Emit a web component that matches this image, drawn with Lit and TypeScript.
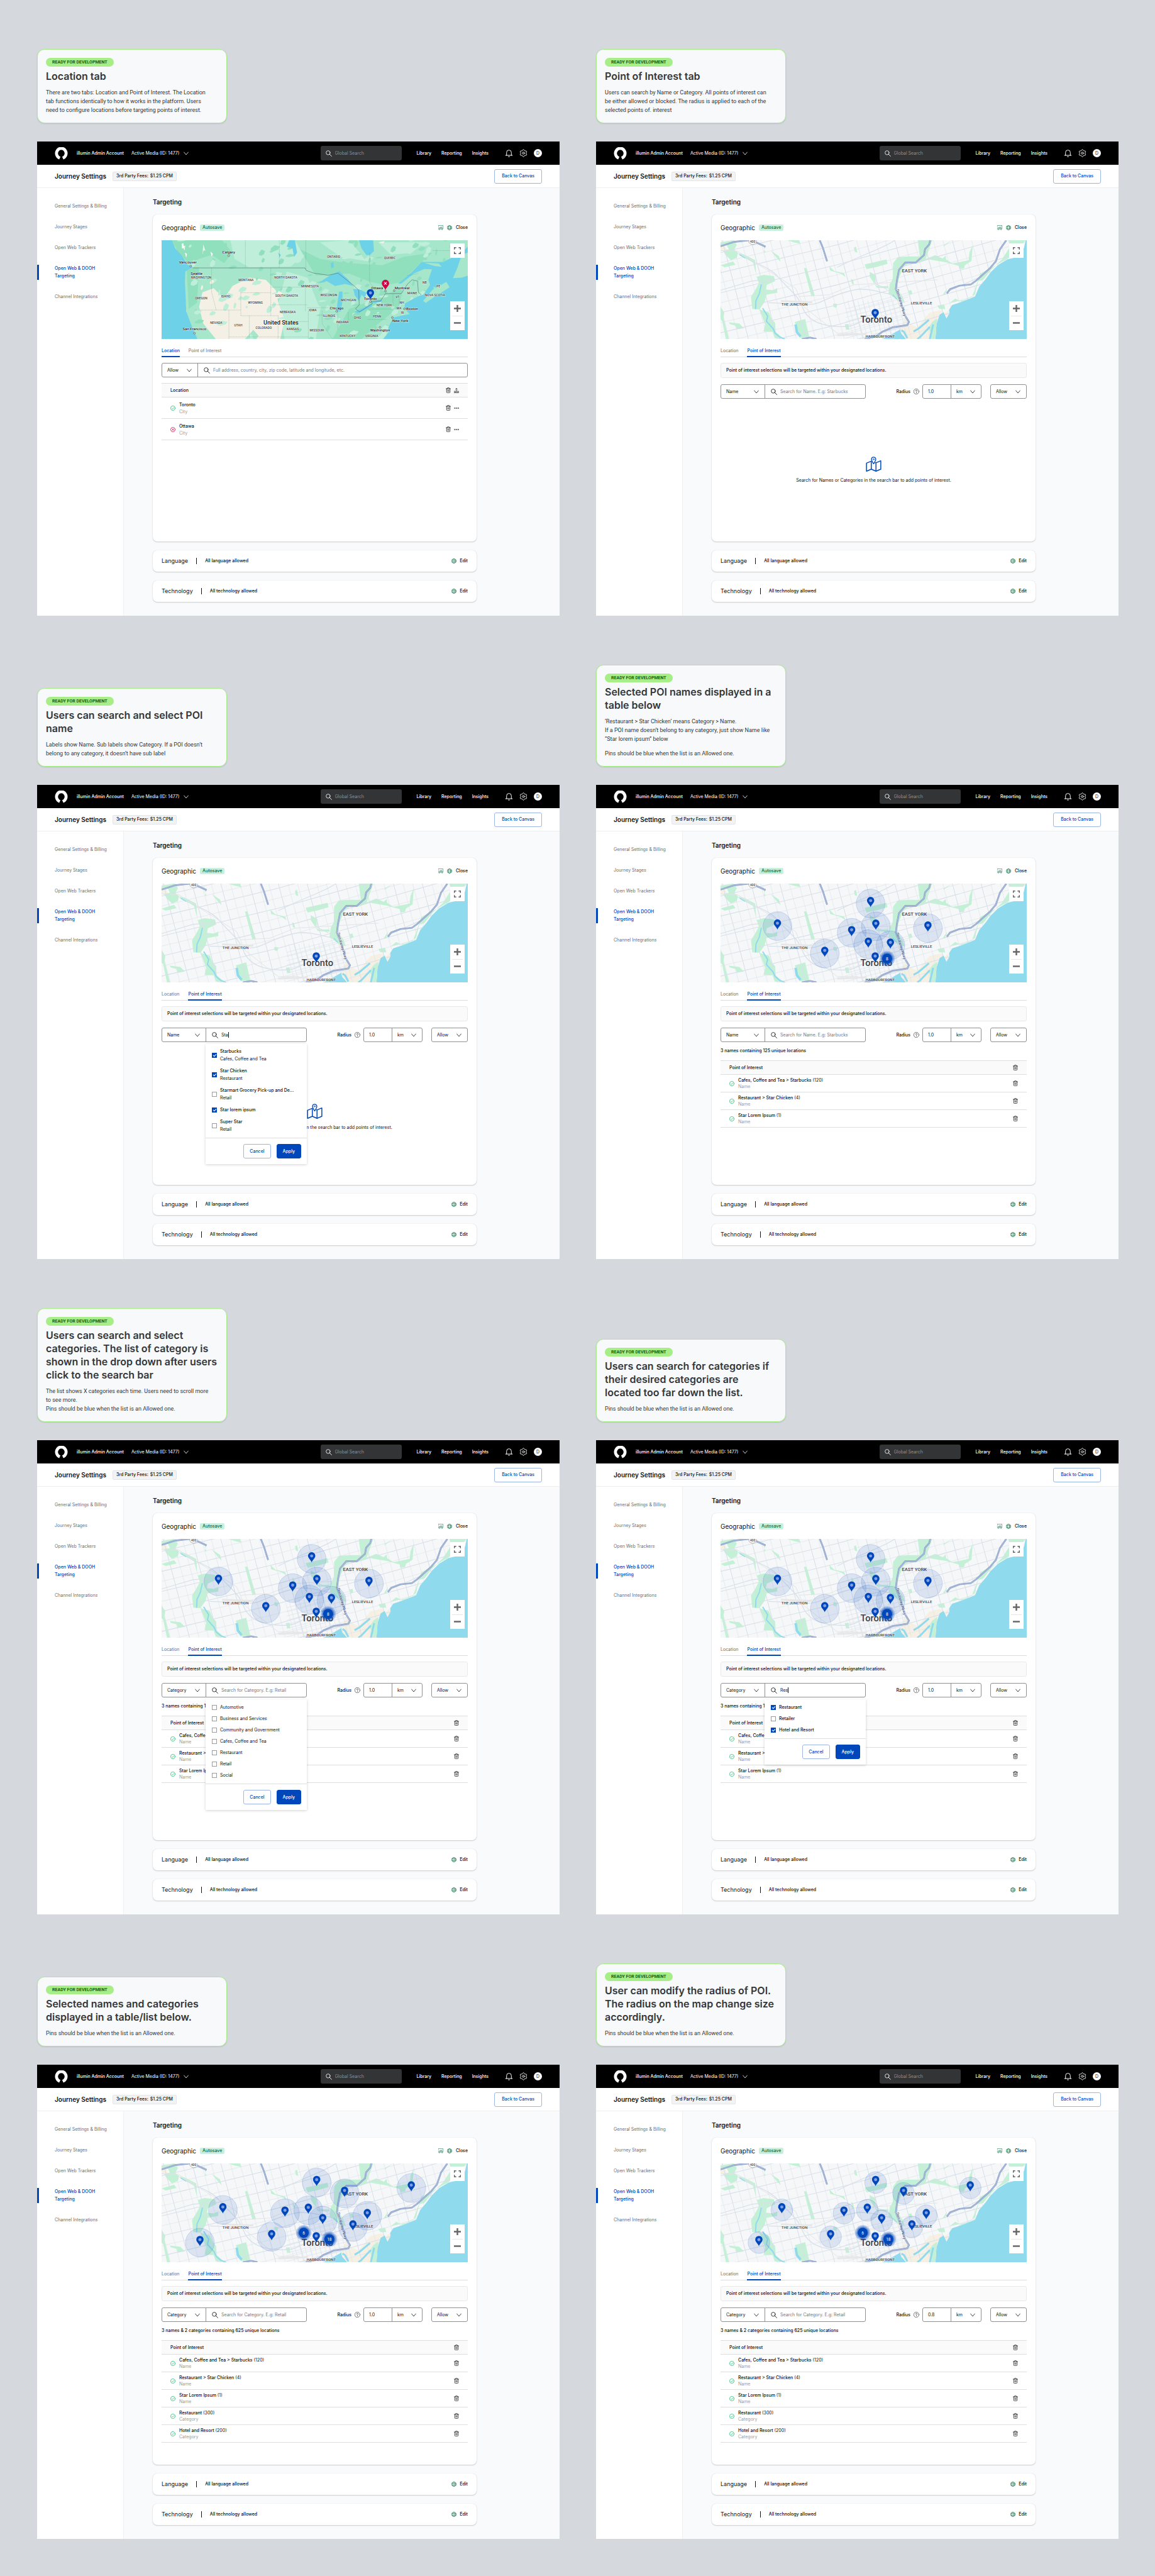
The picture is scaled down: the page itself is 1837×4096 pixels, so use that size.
import { LitElement, html, svg, css, nothing } from "lit";
import { customElement, property } from "lit/decorators.js";
import { classMap } from "lit/directives/class-map.js";

/* ---------- icons ---------- */

const icon = (box: string, body: unknown, cls = "ic") =>
  html`<svg class=${cls} viewBox=${box} fill="none" stroke="currentColor" stroke-linecap="round" stroke-linejoin="round" aria-hidden="true">${body}</svg>`;

const gearOutline = (() => {
  let d = "";
  for (let a = 0; a < 360; a += 6) {
    const t = (a * Math.PI) / 180;
    const r = 9.2 + 1.5 * Math.cos(6 * (t + Math.PI / 2));
    d += `${a ? "L" : "M"}${(12 + r * Math.cos(t)).toFixed(2)} ${(12 + r * Math.sin(t)).toFixed(2)}`;
  }
  return d + "Z";
})();

const icons = {
  logo: () => html`<svg class="logo" viewBox="0 0 36 36" aria-hidden="true">
    <path fill="#fff" d="M12 35.2A18 18.6 0 1 1 24 35.2L20.4 27.4A9.4 10 0 1 0 15.6 27.4Z" />
  </svg>`,
  chevron: () => icon("0 0 14 14", svg`<path d="M1 3.5L7 10.5L13 3.5" stroke-width="1.4"/>`, "ic chev"),
  search: () => icon("0 0 18 18", svg`<circle cx="7" cy="7" r="5.8" stroke-width="1.5"/><path d="M11.3 11.3L17 17" stroke-width="1.6"/>`, "ic mag"),
  bell: () => icon("0 0 24 24", svg`<path d="M5 18.5V10a7 7 0 0 1 14 0V18.5M2 18.5H22M10.3 22.2h3.4" stroke-width="1.8"/>`, "ic tool"),
  gear: () => icon("0 0 24 24", svg`<path d=${gearOutline} stroke-width="1.8"/><circle cx="12" cy="12" r="3" stroke-width="1.8"/>`, "ic tool"),
  board: () => icon("0 0 14 14", svg`<path d="M.7.7H13.3V10.6H.7ZM3.2 10.8V13.5M10.8 10.8V13.5M3.4 8L5.2 5.6L6.6 7.2L8.4 4.4L10.7 8Z" stroke-width="1"/>`, "ic green"),
  globe: () => icon("0 0 14 14", svg`<circle cx="7" cy="7" r="6.3"/><ellipse cx="7" cy="7" rx="3" ry="6.3"/><path d="M1.3 4.6H12.7M1.3 9.4H12.7"/>`, "ic green"),
  help: () => icon("0 0 16 16", svg`<circle cx="8" cy="8" r="7.2"/><path d="M6 6.3a2 2 0 1 1 2.9 1.8c-.6.3-.9.6-.9 1.4M8 11.6v.1" stroke-width="1.2"/>`, "ic help"),
  trash: () => icon("0 0 14 16", svg`<path d="M.8 3.6H13.2M2.2 3.8V13.4a1.8 1.8 0 0 0 1.8 1.8h6a1.8 1.8 0 0 0 1.8-1.8V3.8M4.5 3.4V1.9A1.2 1.2 0 0 1 5.7.8h2.6a1.2 1.2 0 0 1 1.2 1.1V3.4M5.5 7V11.8M8.5 7V11.8" stroke-width="1.3"/>`, "ic trash"),
  upload: () => icon("0 0 16 16", svg`<path d="M8 9V1.2M5.2 3.8L8 1L10.8 3.8M1.2 10.2H14.8V15H1.2ZM4 12.6H7M10.2 12.6H11.8" stroke-width="1.3"/>`, "ic up"),
  dots: () => icon("0 0 16 16", svg`<circle cx="2.4" cy="8" r="1.5"/><circle cx="8" cy="8" r="1.5"/><circle cx="13.6" cy="8" r="1.5"/>`, "ic up"),
  ok: () => icon("0 0 16 16", svg`<circle cx="8" cy="8" r="7.2" stroke-width="1.4"/><path d="M4.8 8.4L7 10.6L11.4 5.8" stroke-width="1.4"/>`, "ic ok"),
  no: () => icon("0 0 16 16", svg`<circle cx="8" cy="8" r="7.2" stroke-width="1.4"/><path d="M5 5L11 11M11 5L5 11" stroke-width="1.4"/>`, "ic no"),
  mapPin: () => icon("0 0 43 42", svg`<path d="M15 13L1.6 18.2V40.6L15 35L28 40.6L41.4 35V11.6L28 17.4L26.4 17M15 13V35M28 17.4V40.6" stroke-width="2.6"/><path d="M21.5 20C18 14.6 15.6 11.4 15.6 7.4a5.9 5.9 0 0 1 11.8 0C27.4 11.4 25 14.6 21.5 20Z" stroke-width="2.4" fill="#fff"/><circle cx="21.5" cy="7.4" r="1.6" stroke-width="1.6"/>`, "ic empty"),
};

/* ---------- maps ---------- */

type Mark = { x: number; y: number; n?: number; bad?: boolean; bare?: boolean };

const drop = (x: number, y: number, fill: string, inner: unknown) => svg`
  <g transform=${`translate(${x} ${y})`}>
    <path fill=${fill} d="M0 0C-4 -13 -17.5 -19 -17.5 -32A17.5 17.5 0 0 1 17.5 -32C17.5 -19 4 -13 0 0Z" />${inner}
  </g>`;

const marks = (list: Mark[], radius: number) => svg`
  ${list.filter((m) => !m.n && !m.bare).map((m) => svg`<circle cx=${m.x} cy=${m.y - 17} r=${radius} fill="#0047bb" fill-opacity=".11" stroke="#0047bb" stroke-opacity=".35" stroke-width="1.4"/>`)}
  ${list.map((m) =>
    m.n
      ? svg`<g><circle cx=${m.x} cy=${m.y} r="37" fill="#0047bb" fill-opacity=".25"/><circle cx=${m.x} cy=${m.y} r="31" fill="#0047bb" fill-opacity=".4"/><circle cx=${m.x} cy=${m.y} r="24.5" fill="#0047bb"/><text x=${m.x} y=${m.y + 7} text-anchor="middle" class="num">${m.n}</text></g>`
      : m.bad
        ? drop(m.x, m.y, "#d50045", svg`<path d="M-6 -38L6 -26M6 -38L-6 -26" stroke="#fff" stroke-width="3.4"/>`)
        : drop(m.x, m.y, "#0047bb", svg`<circle cx="0" cy="-31" r="7.5" fill="#7f9fe0"/>`)
  )}`;

const range = (n: number) => Array.from({ length: n }, (_, i) => i);

const CITY_LAND = "M0 0H1464L1456 37L1411 84L1376 92L1331 119L1296 154L1271 188L1241 223L1221 270L1156 296L1111 311L1096 334L1098 350L1084 375L1070 345L1051 357L1036 404L1031 474H890L866 447L862 428L820 452L776 474H0Z";

const HIGHWAYS = "M0 29L66 8L136 0M171 11L216 31M476 0L491 37L511 101M1006 0L1001 20L981 43L976 72L936 107L886 107L856 142L846 194L841 235L861 287L886 363L904 392L896 407L826 418L776 439L746 462L691 474M1371 0L1341 43L1321 101L1291 136L1226 194L1201 212L1146 218L1101 235L1086 255M390 474L430 467L460 474";

const city = () => svg`
  <clipPath id="land"><path d=${CITY_LAND}/></clipPath>
  <rect width="1469" height="474" fill="#90daee"/>
  <path d=${CITY_LAND} fill="#f6f7f8"/>
  <g clip-path="url(#land)">
    <path fill="#f5f0e3" d="M862 428L876 398L888 362L905 400L945 418L1002 348L1052 336L1080 350L1050 357L1036 404L1031 474H890L866 447ZM848 292L866 330L872 310ZM0 20L24 30L30 50L0 52ZM1096 334L1112 318L1084 375L1076 350Z"/>
    <g fill="#c3f1d5">
      <path d="M62 0L78 22L66 46L84 60L78 84L50 96L24 70L12 50L40 44L30 24L0 28V10ZM0 120L60 102L72 118L20 130Z"/>
      <path d="M84 62L112 68L166 96L172 176L206 166L256 172L262 196L222 214L218 236L252 240L272 230V252L236 258L220 262L212 296L186 332L152 330L146 272L166 240L184 206L176 184L156 108L118 84Z"/>
      <path d="M186 332L232 346L246 380L262 396L264 440L300 470H260L250 440L206 438L214 404L196 356Z"/>
      <path d="M356 392L406 378L426 465L380 468Z"/><path d="M400 134L412 134L452 266L436 270Z"/>
      <path d="M521 124L546 148L592 158L600 176L576 160L526 146Z"/><path d="M691 116L796 92L801 113L752 128L701 139Z"/>
      <path d="M716 152L744 168L740 212L756 222L804 220L806 230L750 228L730 196L716 176Z"/>
      <path d="M946 0H1016L998 50L984 90L1030 72L1066 88L1080 74L1082 92L1112 112L1190 96L1194 60L1210 22L1204 100L1172 120L1168 136L1146 138L1142 122L1110 114L1080 106L1000 92L940 112L900 112L878 130L856 180L846 232L872 268L884 300L856 296L826 270L806 256L812 210L826 186L828 110L850 82L900 78L956 78Z"/>
      <path d="M200 10L214 34L208 58L216 60ZM240 50L280 76L288 104L274 90ZM320 0H376L384 18L350 10ZM1070 24L1110 0L1070 30ZM640 36L650 30L656 60L644 56ZM626 186L636 190L640 214L630 208ZM540 304L560 306L556 324L542 320ZM596 404L614 402L618 430L602 428ZM40 394L90 400L112 422L78 428L72 410L44 402ZM0 320L18 346L14 372L40 474H26L8 388L0 380ZM1066 262L1086 232L1078 262ZM1100 300L1126 280L1156 296L1206 272L1226 220L1246 160L1376 90L1410 60L1464 0H1380L1390 30L1350 92L1300 140L1260 190L1236 196L1220 262L1170 286ZM1040 314L1072 308L1078 330L1050 330ZM1018 390L1040 376L1036 474H1012L1006 440L996 420ZM902 242L916 240L920 258L908 262Z"/>
    </g>
    <g stroke="#d8e0e9" fill="none">
      ${range(36).map((i) => svg`<path d=${`M${-130 + i * 46} 0L${-4 + i * 46} 474`} stroke-width=${i % 3 === 0 ? 3.2 : 1.6}/>`)}
      ${range(19).map((i) => svg`<path d=${`M0 ${60 + i * 48}L560 ${-74 + i * 48}L1469 ${-330 + i * 48}`} stroke-width=${i % 2 === 0 ? 3.2 : 1.6}/>`)}
      ${range(11).map((i) => svg`<path d=${`M${610 + i * 24} 290L${658 + i * 24} 474`} stroke-width="1.8"/>`)}
      ${range(9).map((i) => svg`<path d=${`M600 ${330 + i * 20}L900 ${252 + i * 20}`} stroke-width="1.8"/>`)}
      <path d="M86 66C150 110 230 120 280 180S370 260 392 320S470 410 560 414S640 400 700 380" stroke-width="4"/>
      <path d="M230 300C330 300 420 320 470 300S600 240 660 236S760 250 830 262" stroke-width="4"/>
      <path d="M0 240L150 196L260 186M560 130C700 60 780 40 836 0M745 170V210L800 236M1080 250L1260 170" stroke-width="3.4"/>
    </g>
    <g stroke="#e2e4e6" fill="none" stroke-width="3"><path d="M0 50L80 52L360 230L400 320L560 446H660M380 270L520 262L640 214L1040 190"/></g>
    <path d="M290 292L440 298M560 456L700 450" stroke="#e7e7e8" stroke-width="9"/>
    <g fill="none" stroke="#90daee" stroke-linejoin="round">
      <path d="M196 212L186 256L170 290L168 330M202 326L226 364L220 388L252 424L262 446L286 466L310 474" stroke-width="6"/>
      <path d="M360 404L366 440L384 462" stroke-width="12"/><path d="M92 70L118 86M826 262L846 282" stroke-width="4"/>
      <path d="M1000 382L950 424L926 438M1004 416L960 462L944 474M896 470L880 440L868 432M1020 404L1004 474" stroke-width="9"/>
    </g>
    <path fill="none" stroke="#8197c2" stroke-width="8" stroke-linejoin="round" d=${HIGHWAYS}/>
    <path fill="none" stroke="#a9b9d9" stroke-width="5" stroke-linejoin="round" d=${HIGHWAYS}/>
  </g>
  <path d="M136 -6H172V8C172 16 162 19 154 21C146 19 136 16 136 8Z" fill="#fff" stroke="#8a8d90" stroke-width="2"/>
  <g class="lb"><text x="154" y="13" class="t15" text-anchor="middle">400</text>
    <text x="870" y="155" class="t23">EAST YORK</text><text x="292" y="313" class="t18">THE JUNCTION</text>
    <text x="913" y="309" class="t18">LESLIEVILLE</text><text x="696" y="467" class="t18">HARBOURFRONT</text>
    <text transform="translate(842 238) rotate(74)" class="t18 road">Don Valley Pkwy</text>
    <text x="671" y="396" class="t44">Toronto</text></g>`;

const REGIONS: [number, number, string][] = [
  [826, 84, "ONTARIO"], [1095, 91, "QUEBEC"], [1262, 207, "NB"], [1328, 226, "PE"], [1202, 261, "MAINE"],
  [1312, 269, "NOVA SCOTIA"], [1132, 278, "VT"], [1152, 304, "NH"], [1139, 333, "MA"], [1156, 353, "RI"],
  [1068, 318, "NEW YORK"], [1034, 371, "PENN"], [940, 378, "OHIO"], [868, 397, "INDIANA"], [804, 368, "ILLINOIS"],
  [897, 293, "MICHIGAN"], [802, 269, "WISCONSIN"], [725, 342, "IOWA"], [745, 437, "MISSOURI"], [892, 465, "KENTUCKY"],
  [1008, 465, "VIRGINIA"], [712, 227, "MINNESOTA"], [629, 431, "KANSAS"], [490, 426, "COLORADO"], [368, 412, "UTAH"],
  [262, 400, "NEVADA"], [405, 195, "MONTANA"], [450, 306, "WYOMING"], [596, 183, "NORTH DAKOTA"], [600, 272, "SOUTH DAKOTA"],
  [605, 350, "NEBRASKA"], [190, 283, "OREGON"], [308, 275, "IDAHO"], [190, 184, "WASHINGTON"],
];

const CITIES: [number, number, string, number, number][] = [
  [1034, 236, "Ottawa", 1074, 244], [1154, 235, "Montreal", 1116, 242], [1002, 286, "Toronto", 1002, 294],
  [840, 332, "Chicago", 840, 341], [1202, 334, "Boston", 1165, 329], [1145, 392, "New York", 1107, 371],
  [1048, 437, "Washington", 1048, 418], [158, 432, "San Francisco", 158, 446], [322, 64, "Calgary", 322, 74],
  [126, 112, "Vancouver", 140, 124], [168, 166, "Seattle", 150, 176],
];

const MAINLAND = "M50 0L66 40L92 66L125 118L150 130L114 150L112 200L115 260L118 340L140 400L160 446L172 474H1063L1090 440L1087 420L1111 371L1150 362L1190 355L1167 329V304L1200 285L1239 265L1255 262L1288 214L1280 190L1297 140L1260 138L1210 160L1150 208L1135 207L1199 155L1247 104L1350 104L1406 78L1440 60L1469 30V0Z";

/* Small vegetation patches, spread with a fixed linear-congruential sequence. */
const patches = (() => {
  let seed = 7;
  const next = () => (seed = (seed * 16807) % 2147483647) / 2147483647;
  return range(240).map(() => {
    const x = next() * 1469;
    const y = next() * 474;
    const arid = x > 170 && x < 560 && y > 190;
    const tone = next();
    const fill = arid ? (tone < 0.5 ? "#bdeed8" : "#f5f0e5") : y > 90 && y < 200 && x > 700 ? "#90dfbd" : tone < 0.5 ? "#90dfbd" : "#bfeeda";
    const w = 8 + next() * 30;
    const h = 4 + next() * 14;
    return { d: `M${x} ${y}l${w * 0.5} ${-h}l${w * 0.7} ${h * 0.5}l${-w * 0.2} ${h}l${-w * 0.6} ${h * 0.6}l${-w * 0.5} ${-h * 0.3}Z`, fill };
  });
})();

const continent = () => svg`
  <clipPath id="main"><path d=${MAINLAND}/></clipPath>
  <rect width="1469" height="474" fill="#6dd2e7"/>
  <path fill="#a6e7cb" d=${MAINLAND}/>
  <path fill="#a6e7cb" d="M1255 291L1300 238L1366 200L1382 226L1310 271L1268 300ZM1398 182L1420 130L1440 70L1469 60V170L1440 180ZM1304 222L1322 232L1306 234ZM1260 108L1330 112L1344 128L1310 124Z"/>
  <g clip-path="url(#main)">
    <path fill="#90dfbd" d="M50 0H290L340 60L300 110L240 70L180 90L130 110L80 60ZM660 40L760 90L900 110L1060 120L1160 80L1300 60L1240 110L1150 200L1080 215L1000 200L900 160L740 170ZM900 330L1060 270L1160 220L1140 320L1040 400L960 474H820L860 400ZM120 130L180 130L170 300L130 330Z"/>
    <path fill="#bfeeda" d="M330 0H640L680 70L620 126L420 130L350 90ZM760 10L900 0L950 60L980 100L860 80ZM1040 10L1260 10L1200 60L1100 70ZM600 150L700 180L760 330L740 474H590L560 300Z"/>
    <path fill="#f5f0e5" d="M196 250L250 230L300 280L340 220L420 180L500 190L548 240L560 300L590 380L570 474H480L440 430L400 474H260L200 400L180 320ZM1040 10L1070 4L1064 16ZM200 20L210 50L196 70ZM100 30L114 26L110 50Z"/>
    ${patches.map((p) => svg`<path fill=${p.fill} d=${p.d}/>`)}
    <path fill="#fff" d="M96 18L104 14L108 34L98 40ZM112 60L122 66L118 84ZM234 54L246 66L240 78Z"/>
  </g>
  <path fill="#6dd2e7" d="M947 0H1015L1019 52L1000 70L983 72L959 39ZM752 207L808 168L852 149L895 188L919 220L880 210L832 220L792 196ZM840 342L844 297L852 246L868 246L868 291L860 342ZM919 233L950 236L983 252L975 278L960 262L947 291L927 265ZM927 342L970 324L1011 304L1008 318L940 352ZM1007 297L1055 284L1059 294L1020 302ZM812 110L824 104L826 130L814 134ZM600 30L612 0H640L650 60L636 80L628 40ZM560 60L572 70L566 84Z"/>
  <path fill="none" stroke="#5d8f80" stroke-width="1.2" stroke-dasharray="4 3" d="M402 0V133M565 0V133M692 0V140M998 60V200L1030 250M240 133V250L262 335M323 335V474M380 252V362M421 362V474M559 362V474M704 340V474M160 335H380M380 252H524M524 133V362M524 225H680M524 310H700M380 362H560M559 390H704M323 464H704M690 210V340M700 324H800M896 345V390M845 345V430M990 330H1110M990 380H1080M1110 260V330M1140 262V320M1180 170L1230 160M1300 50H1400M770 340V400L820 474"/>
  <path fill="none" stroke="#456" stroke-width="1.6" d="M150 133H688L694 145L730 158L800 168L846 158L920 216L946 240L948 310L930 330L950 344L1011 304L1007 293L1050 292L1074 256L1150 256L1180 210L1202 190L1228 196L1232 250L1246 262"/>
  <g class="lb">${REGIONS.map(([x, y, t]) => svg`<text x=${x} y=${y} class="t15" text-anchor="middle">${t}</text>`)}
    ${CITIES.map(([x, y, t, cx, cy]) => svg`<text x=${x} y=${y} class="t18 dark" text-anchor="middle">${t}</text><circle cx=${cx} cy=${cy} r="4" fill="#fff" stroke="#333" stroke-width="2"/>`)}
    <text x="573" y="404" class="t28 dark" text-anchor="middle">United States</text></g>`;

@customElement("geo-map")
export class GeoMap extends LitElement {
  @property() kind: "city" | "continent" = "city";
  @property({ attribute: false }) marks: Mark[] = [];
  @property({ type: Number }) radius = 69;

  static styles = css`
    :host { display: block; position: relative; height: 157px; font-family: Roboto, sans-serif; }
    .map { display: block; width: 100%; height: 100%; }
    .lb text { fill: #3c4043; font-weight: 500; paint-order: stroke; stroke: #ffffffb0; stroke-width: 3px; }
    .lb .dark { fill: #202124; }
    .t15 { font-size: 15px; }
    .t18 { font-size: 18px; }
    .t23 { font-size: 23px; }
    .t28 { font-size: 28px; }
    .t44 { font-size: 44px; }
    .lb .road { fill: #5a6a8c; }
    .num { fill: #fff; font-size: 20px; }
    button { display: grid; place-items: center; width: 23px; height: 23px; padding: 0; border: 0; background: #fff; color: #666; }
    button svg { width: 11px; height: 11px; display: block; }
    .full, .zoom { position: absolute; right: 5px; border-radius: 1px; }
    .full { top: 5px; }
    .zoom { bottom: 14px; background: #fff; }
    .zoom button + button { position: relative; }
    .zoom button + button::before { content: ""; position: absolute; top: 0; left: 3px; right: 3px; height: 1px; background: #e6e6e6; }
  `;

  render() {
    return html`
      <svg class="map" viewBox="0 0 1469 474" preserveAspectRatio="xMidYMid slice" role="img" aria-label="Targeted area">
        ${this.kind === "city" ? city() : continent()} ${marks(this.marks, this.radius)}
      </svg>
      <button class="full" aria-label="Full screen">
        <svg viewBox="0 0 18 18" fill="none" stroke="currentColor" stroke-width="2.4"><path d="M1.2 6V1.2H6M12 1.2H16.8V6M16.8 12V16.8H12M6 16.8H1.2V12" /></svg>
      </button>
      <div class="zoom">
        <button aria-label="Zoom in"><svg viewBox="0 0 18 18" stroke="currentColor" stroke-width="4"><path d="M9 0V18M0 9H18" /></svg></button>
        <button aria-label="Zoom out"><svg viewBox="0 0 18 18" stroke="currentColor" stroke-width="4"><path d="M0 9H18" /></svg></button>
      </div>`;
  }
}

/* ---------- data ---------- */

type Option = { label: string; sub?: string; on?: boolean };
type Row = { name: string; count?: number; sub: string; bad?: boolean };
type Screen = {
  title: string[];
  body: string[][];
  tab: "location" | "poi";
  by?: "Name" | "Category";
  query?: string;
  radius?: string;
  marks: Mark[];
  ring?: number;
  menu?: Option[];
  summary?: string;
  rows?: Row[];
};

const HOME: Mark = { x: 742, y: 379, bare: true };

const NAME_MARKS: Mark[] = [
  { x: 720, y: 113 }, { x: 273, y: 221 }, { x: 745, y: 222 }, { x: 629, y: 253 }, { x: 995, y: 231 },
  { x: 709, y: 308 }, { x: 815, y: 313 }, { x: 500, y: 352 }, HOME, { x: 799, y: 360, n: 8 },
];

const ALL_MARKS: Mark[] = [
  { x: 744, y: 109 }, { x: 878, y: 161 }, { x: 1198, y: 135 }, { x: 294, y: 240 }, { x: 592, y: 256 }, { x: 704, y: 242 },
  { x: 773, y: 292 }, { x: 987, y: 268 }, { x: 918, y: 322 }, { x: 528, y: 369 }, { x: 184, y: 397 }, HOME,
  { x: 682, y: 333, n: 6 }, { x: 805, y: 364, n: 18 },
];

const NAME_ROWS: Row[] = [
  { name: "Cafes, Coffee and Tea > Starbucks", count: 120, sub: "Name" },
  { name: "Restaurant > Star Chicken", count: 4, sub: "Name" },
  { name: "Star Lorem Ipsum", count: 1, sub: "Name" },
];

const ALL_ROWS: Row[] = [
  ...NAME_ROWS,
  { name: "Restaurant", count: 300, sub: "Category" },
  { name: "Hotel and Resort", count: 200, sub: "Category" },
];

const PINS_NOTE = "Pins should be blue when the list is an Allowed one.";

const SCREENS: Screen[][] = [
  [
    {
      title: ["Location tab"],
      body: [["There are two tabs: Location and Point of Interest. The Location", "tab functions identically to how it works in the platform. Users", "need to configure locations before targeting points of interest."]],
      tab: "location",
      marks: [{ x: 1002, y: 284, bare: true }, { x: 1074, y: 239, bare: true, bad: true }],
      rows: [{ name: "Toronto", sub: "City" }, { name: "Ottawa", sub: "City", bad: true }],
    },
    {
      title: ["Point of Interest tab"],
      body: [["Users can search by Name or Category. All points of interest can", "be either allowed or blocked. The radius is applied to each of the", "selected points of. interest"]],
      tab: "poi",
      by: "Name",
      marks: [HOME],
    },
  ],
  [
    {
      title: ["Users can search and select POI", "name"],
      body: [["Labels show Name. Sub labels show Category. If a POI doesn’t", "belong to any category, it doesn’t have sub label"]],
      tab: "poi",
      by: "Name",
      query: "Sta",
      marks: [HOME],
      menu: [
        { label: "Starbucks", sub: "Cafes, Coffee and Tea", on: true },
        { label: "Star Chicken", sub: "Restaurant", on: true },
        { label: "Starmart Grocery Pick-up and De...", sub: "Retail" },
        { label: "Star lorem ipsum", on: true },
        { label: "Super Star", sub: "Retail" },
      ],
    },
    {
      title: ["Selected POI names displayed in a", "table below"],
      body: [["‘Restaurant > Star Chicken’ means Category > Name.", "If a POI name doesn’t belong to any category, just show Name like", "“Star lorem ipsum” below"], [PINS_NOTE]],
      tab: "poi",
      by: "Name",
      marks: NAME_MARKS,
      summary: "3 names containing 125 unique locations",
      rows: NAME_ROWS,
    },
  ],
  [
    {
      title: ["Users can search and select", "categories. The list of category is", "shown in the drop down after users", "click to the search bar"],
      body: [["The list shows X categories each time. Users need to scroll more", "to see more.", PINS_NOTE]],
      tab: "poi",
      by: "Category",
      marks: NAME_MARKS,
      summary: "3 names containing 125 unique locations",
      rows: NAME_ROWS,
      menu: ["Automotive", "Business and Services", "Community and Government", "Cafes, Coffee and Tea", "Restaurant", "Retail", "Social"].map((label) => ({ label })),
    },
    {
      title: ["Users can search for categories if", "their desired categories are", "located too far down the list."],
      body: [[PINS_NOTE]],
      tab: "poi",
      by: "Category",
      query: "Res",
      marks: NAME_MARKS,
      summary: "3 names containing 125 unique locations",
      rows: NAME_ROWS,
      menu: [{ label: "Restaurant", on: true }, { label: "Retailer" }, { label: "Hotel and Resort", on: true }],
    },
  ],
  [
    {
      title: ["Selected names and categories", "displayed in a table/list below."],
      body: [[PINS_NOTE]],
      tab: "poi",
      by: "Category",
      marks: ALL_MARKS,
      summary: "3 names & 2 categories containing 625 unique locations",
      rows: ALL_ROWS,
    },
    {
      title: ["User can modify the radius of POI.", "The radius on the map change size", "accordingly."],
      body: [[PINS_NOTE]],
      tab: "poi",
      by: "Category",
      radius: "0.8",
      ring: 52,
      marks: ALL_MARKS,
      summary: "3 names & 2 categories containing 625 unique locations",
      rows: ALL_ROWS,
    },
  ],
];

/* ---------- annotation card ---------- */

@customElement("note-card")
export class NoteCard extends LitElement {
  @property({ attribute: false }) heading: string[] = [];
  @property({ attribute: false }) body: string[][] = [];

  static styles = css`
    :host { display: block; box-sizing: border-box; width: 302px; padding: 13px; background: #f7f9fb; border: 1px solid #a8ee88; border-radius: 12px; box-shadow: 0 1px 2px #0000001f; color: #333639; white-space: nowrap; }
    .badge { display: table; padding: 0 10px; height: 14px; border-radius: 7px; background: #a8ee88; color: #17600f; font: 700 7px/14px Roboto, sans-serif; }
    h2 { margin: 5px 0 8px; font: 600 16px/21px Inter, sans-serif; }
    p { margin: 0; font: 400 9px/14px Roboto, sans-serif; }
    p + p { margin-top: 9px; }
  `;

  render() {
    const lines = (l: string[]) => l.map((t, i) => html`${i ? html`<br />` : nothing}${t}`);
    return html`<span class="badge">READY FOR DEVELOPMENT</span>
      <h2>${lines(this.heading)}</h2>
      ${this.body.map((p) => html`<p>${lines(p)}</p>`)}`;
  }
}

/* ---------- product screen ---------- */

const NAV = [["General Settings & Billing"], ["Journey Stages"], ["Open Web Trackers"], ["Open Web & DOOH", "Targeting"], ["Channel Integrations"]];

@customElement("settings-screen")
export class SettingsScreen extends LitElement {
  @property({ attribute: false }) data!: Screen;

  static styles = css`
    :host { display: flex; flex-direction: column; background: #f9fafb; color: #111; font: 400 7px/12px Inter, sans-serif; }
    * { box-sizing: border-box; }
    button, input, select { font: inherit; color: inherit; margin: 0; }
    a { color: inherit; text-decoration: none; }
    svg { display: block; flex: none; }
    .ic { width: 8px; height: 8px; }
    .trash { height: 9px; }
    .mag { width: 10px; height: 10px; }
    .help { width: 9px; height: 9px; }
    .tool { width: 13px; height: 13px; }
    .green { color: #0a6b42; }
    .ok { color: #12b76a; }
    .no { color: #d50045; }
    .empty { width: 25px; height: 24px; color: #0047bb; }

    .top { display: flex; align-items: center; height: 37px; padding: 0 28px; background: #000; color: #fff; }
    .logo { width: 21px; height: 20px; }
    .top strong { font-weight: 500; margin-left: 14px; }
    .account { display: flex; align-items: center; gap: 7px; margin-left: 12px; padding: 0; border: 0; background: none; }
    .global { display: flex; align-items: center; gap: 5px; width: 129px; height: 23px; margin-left: auto; padding: 0 8px; border-radius: 3px; background: #333436; }
    .global input { flex: 1; min-width: 0; padding: 0; border: 0; background: none; }
    .global input::placeholder { color: #8c8f91; opacity: 1; }
    .links { display: flex; gap: 16px; margin: 0 26px 0 24px; font-weight: 500; }
    .tools { display: flex; align-items: center; gap: 10px; }
    .tools button { display: grid; padding: 0; border: 0; background: none; }
    .tools .avatar { width: 13px; height: 13px; place-items: center; border-radius: 50%; background: #fff; color: #111; line-height: 13px; }

    .sub { display: flex; align-items: center; height: 37px; padding: 0 28px; background: #fff; border-bottom: 1px solid #eceef0; }
    h1, h2, h3 { margin: 0; font: 600 10px/14px Inter, sans-serif; }
    .fee { display: flex; align-items: center; gap: 3px; height: 15px; margin-left: 10px; padding: 0 5px; border: 1px solid #e3e5e6; border-radius: 2px; background: #f2f3f4; font-weight: 500; }
    .back { margin-left: auto; }
    .btn { height: 23px; padding: 0 9px; border: 1px solid #9db6e6; border-radius: 3px; background: #fff; color: #0047bb; font-weight: 500; }
    .btn.back { padding: 0 11px; }
    .btn.solid { border-color: #0047bb; background: #0047bb; color: #fff; }

    .cols { display: grid; grid-template-columns: 138px 1fr; flex: 1; }
    nav.side { display: flex; flex-direction: column; gap: 21px; padding-top: 23px; background: #fff; border-right: 1px solid #eef0f2; color: #6b6f72; }
    nav.side a { padding: 0 25px; border-left: 3px solid transparent; }
    nav.side a.on { color: #0047bb; border-left-color: #0047bb; font-weight: 500; }

    main { display: flex; flex-direction: column; gap: 14px; padding: 15px 132px 22px 46px; }
    main > h2 { margin-bottom: -1px; }
    .card { display: flex; flex-direction: column; padding: 0 14px; border-radius: 7px; background: #fff; box-shadow: 0 0 1px #0a285033, 0 1px 2px #0000002b; }
    .geo { min-height: 520px; }
    .head { display: flex; align-items: center; gap: 6px; height: 41px; }
    .head h3 { font-weight: 400; }
    .auto { padding: 0 4px; border-radius: 2px; background: #c9f0de; color: #0a6b42; font-weight: 500; line-height: 10px; }
    .head .end { display: flex; align-items: center; gap: 6px; margin-left: auto; font-weight: 500; }
    .link { padding: 0; border: 0; background: none; font-weight: 500; }
    .line { display: flex; align-items: center; height: 34px; }
    .line h3 { font: 400 9px/14px Inter, sans-serif; }
    .line i { width: 1px; height: 10px; margin: 0 13px; background: #111; }
    .line .end { display: flex; align-items: center; gap: 5px; margin-left: auto; }

    .tabs { display: flex; gap: 14px; height: 19px; margin: 10px 0 9px; border-bottom: 1px solid #d9dbdd; }
    .tabs button { height: 19px; padding: 0; border: 0; border-bottom: 2px solid transparent; background: none; color: #6b6f72; }
    .tabs .on { color: #0047bb; border-color: #0047bb; font-weight: 500; }
    .banner { margin: 0 0 10px; height: 24px; padding: 0 8px; border: 1px solid #e8e9ea; border-radius: 3px; background: #fafafa; font-weight: 500; line-height: 22px; }
    .controls { display: flex; align-items: center; gap: 14px; }
    .group { display: flex; height: 23px; border: 1px solid #8f9193; border-radius: 3px; background: #fff; }
    .group > * + * { border-left: 1px solid #8f9193; }
    .combo { position: relative; width: 231px; }
    .pick { position: relative; display: flex; align-items: center; width: 56px; }
    .pick.by { width: 69px; }
    .pick.unit { width: 48px; }
    .pick select { width: 100%; height: 21px; padding: 0 8px; border: 0; background: none; appearance: none; }
    .chev { pointer-events: none; }
    .pick .chev { position: absolute; right: 9px; }
    .find { display: flex; flex: 1; align-items: center; gap: 5px; min-width: 0; padding: 0 9px; }
    .find input { flex: 1; min-width: 0; padding: 0; border: 0; outline: 0; background: none; }
    .find input::placeholder { color: #77797b; opacity: 1; }
    .find.typed { gap: 0; }
    .find.typed input { flex: none; field-sizing: content; }
    .find.typed .mag { margin-right: 5px; }
    .caret { width: 1px; height: 9px; background: #111; }
    .radius { display: flex; align-items: center; gap: 5px; margin-left: auto; font-weight: 500; }
    .radius input { width: 44px; padding: 0 8px; border: 0; background: none; font-weight: 400; }
    .radius .group { font-weight: 400; }

    .combo .menu { position: absolute; z-index: 1; top: 25px; left: 69px; right: -1px; border: 0; background: #fff; box-shadow: 0 1px 4px #0000002e; }
    .menu ul { margin: 0; padding: 7px 10px; list-style: none; display: grid; gap: 6px; border-bottom: 1px solid #dcdee0; }
    .menu ul.rich { padding: 6px 10px 7px; gap: 7px; }
    .menu label { display: flex; align-items: center; gap: 5px; }
    .menu label > span { min-width: 0; white-space: nowrap; }
    .strong { font-weight: 500; }
    .menu small { display: block; font-size: 7px; font-weight: 400; }
    .menu input { appearance: none; flex: none; width: 8px; height: 8px; border: 1px solid #9a9c9e; background: #fff; display: grid; place-items: center; }
    .menu input:checked { border-color: #0047bb; background: #0047bb; }
    .menu input:checked::after { content: ""; width: 2px; height: 4px; border: solid #fff; border-width: 0 1px 1px 0; transform: translateY(-1px) rotate(45deg); }
    .menu .acts { display: flex; justify-content: flex-end; gap: 9px; padding: 9px; }

    .sum { margin: 8px 0 0; font-weight: 500; }
    table { width: 100%; margin-top: 9px; border-collapse: collapse; }
    tr { border-bottom: 1px solid #dcdee0; }
    thead tr { height: 22px; border-top: 1px solid #dcdee0; background: #fafafa; }
    tbody tr { height: 28px; }
    .tall tbody tr { height: 34px; }
    th { padding: 0 0 0 14px; text-align: left; font-weight: 500; }
    td { padding: 0; }
    .mark { width: 28px; padding-left: 14px; }
    td b { display: block; font-weight: 500; line-height: 10px; }
    td b span { font-weight: 400; }
    td small { display: block; font-size: 7px; line-height: 10px; color: #9a9c9e; }
    .tall td b, .tall td small { line-height: 11px; }
    .row-acts { display: flex; justify-content: flex-end; align-items: center; gap: 5px; padding-right: 14px; }
    .row-acts button { display: block; padding: 0; border: 0; background: none; }
    .none { display: flex; flex: 1; flex-direction: column; align-items: center; justify-content: center; gap: 9px; line-height: 10px; }
    .none.low { padding-top: 12px; }
    .none p { margin: 0; }
  `;

  private pick(label: string, value: string, cls = "") {
    return html`<span class="pick ${cls}"><select aria-label=${label}><option>${value}</option></select>${icons.chevron()}</span>`;
  }

  private find(placeholder: string, query?: string) {
    return html`<label class=${classMap({ find: true, typed: !!query })}>${icons.search()}
      <input type="text" aria-label="Search" placeholder=${query ? "" : placeholder} .value=${query ?? ""} />${query ? html`<span class="caret"></span>` : nothing}</label>`;
  }

  private menu(items: Option[]) {
    const rich = items.some((o) => o.sub);
    return html`<div class="menu">
      <ul class=${rich ? "rich" : ""}>
        ${items.map((o) => html`<li><label><input type="checkbox" .checked=${!!o.on} /><span class=${rich || this.data.query ? "strong" : ""}>${o.label}${o.sub ? html`<small>${o.sub}</small>` : nothing}</span></label></li>`)}
      </ul>
      <div class="acts"><button class="btn">Cancel</button><button class="btn solid">Apply</button></div>
    </div>`;
  }

  private table(rows: Row[], loc: boolean) {
    return html`<table class=${loc ? "tall" : ""}>
      <thead><tr><th colspan="2">${loc ? "Location" : "Point of Interest"}</th>
        <th><div class="row-acts"><button aria-label="Delete all">${icons.trash()}</button>${loc ? html`<button aria-label="Upload">${icons.upload()}</button>` : nothing}</div></th></tr></thead>
      <tbody>${rows.map((r) => html`<tr>
        <td class="mark">${r.bad ? icons.no() : icons.ok()}</td>
        <td><b>${r.name}${r.count ? html` <span>(${r.count})</span>` : nothing}</b><small>${r.sub}</small></td>
        <td><div class="row-acts"><button aria-label="Delete">${icons.trash()}</button>${loc ? html`<button aria-label="More">${icons.dots()}</button>` : nothing}</div></td>
      </tr>`)}</tbody>
    </table>`;
  }

  private poi(d: Screen) {
    return html`<p class="banner">Point of interest selections will be targeted within your designated locations.</p>
      <div class="controls">
        <div class="group combo">${this.pick("Search by", d.by!, "by")}
          ${this.find(d.by === "Name" ? "Search for Name. E.g: Starbucks" : "Search for Category. E.g: Retail", d.query)}
          ${d.menu ? this.menu(d.menu) : nothing}</div>
        <div class="radius"><label for="radius">Radius</label>${icons.help()}
          <div class="group"><input id="radius" type="text" .value=${d.radius ?? "1.0"} />${this.pick("Unit", "km", "unit")}</div></div>
        <div class="group">${this.pick("Rule", "Allow")}</div>
      </div>
      ${d.summary ? html`<p class="sum">${d.summary}</p>` : nothing}
      ${d.rows ? this.table(d.rows, false) : html`<div class=${classMap({ none: true, low: !!d.menu })}>${icons.mapPin()}<p>Search for Names or Categories in the search bar to add points of interest.</p></div>`}`;
  }

  render() {
    const d = this.data;
    const loc = d.tab === "location";
    return html`
      <header class="top">${icons.logo()}<strong>illumin Admin Account</strong>
        <button class="account">Active Media (ID: 1477) ${icons.chevron()}</button>
        <label class="global">${icons.search()}<input type="text" aria-label="Global search" placeholder="Global Search" /></label>
        <div class="links"><a href="#library">Library</a><a href="#reporting">Reporting</a><a href="#insights">Insights</a></div>
        <div class="tools"><button aria-label="Notifications">${icons.bell()}</button><button aria-label="Settings">${icons.gear()}</button><button class="avatar">D</button></div>
      </header>
      <div class="sub"><h1>Journey Settings</h1><span class="fee"><span>3rd Party Fees:</span><span>$1.25 CPM</span></span><button class="btn back">Back to Canvas</button></div>
      <div class="cols">
        <nav class="side">${NAV.map((n, i) => html`<a href="#settings" class=${i === 3 ? "on" : ""}>${n.map((t, k) => html`${k ? html`<br />` : nothing}${t}`)}</a>`)}</nav>
        <main>
          <h2>Targeting</h2>
          <section class="card geo">
            <div class="head"><h3>Geographic</h3><span class="auto">Autosave</span>
              <span class="end">${icons.board()}${icons.globe()}<button class="link">Close</button></span></div>
            <geo-map .kind=${loc ? "continent" : "city"} .marks=${d.marks} .radius=${d.ring ?? 69}></geo-map>
            <div class="tabs" role="tablist">
              <button role="tab" class=${loc ? "on" : ""}>Location</button><button role="tab" class=${loc ? "" : "on"}>Point of Interest</button>
            </div>
            ${loc
              ? html`<div class="group">${this.pick("Rule", "Allow")}${this.find("Full address, country, city, zip code, latitude and longitude, etc.")}</div>${this.table(d.rows!, true)}`
              : this.poi(d)}
          </section>
          ${["Language", "Technology"].map((t) => html`<section class="card"><div class="line"><h3>${t}</h3><i></i><span class="strong">All ${t.toLowerCase()} allowed</span>
            <span class="end">${icons.globe()}<button class="link">Edit</button></span></div></section>`)}
        </main>
      </div>`;
  }
}

/* ---------- board ---------- */

@customElement("app-root")
export class AppRoot extends LitElement {
  static styles = css`
    :host { display: block; padding: 0 58px 59px 59px; background: #d5d9de; }
    .row { display: grid; grid-template-columns: 1fr 1fr; column-gap: 58px; row-gap: 29px; padding-top: 78px; }
    note-card { align-self: end; }
  `;

  render() {
    return SCREENS.map(
      (pair) => html`<div class="row">
        ${pair.map((s) => html`<note-card .heading=${s.title} .body=${s.body}></note-card>`)}
        ${pair.map((s) => html`<settings-screen .data=${s}></settings-screen>`)}
      </div>`
    );
  }
}
